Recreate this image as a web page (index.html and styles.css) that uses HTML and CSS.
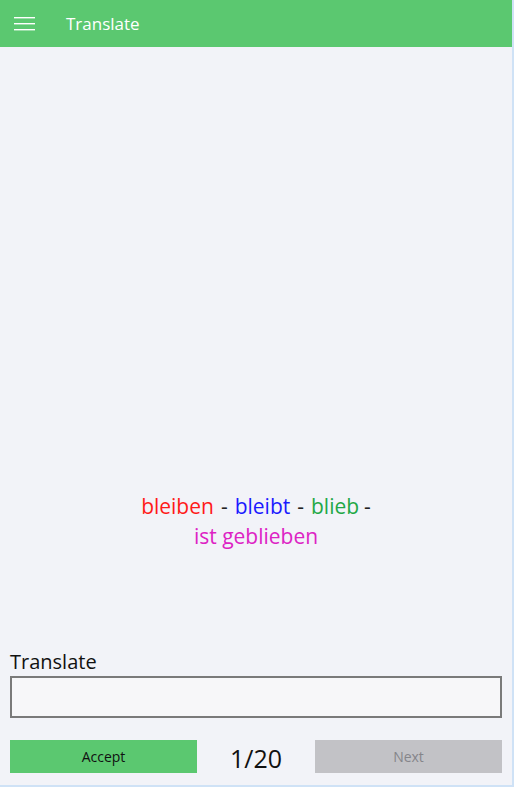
FILE: index.html
```html
<!DOCTYPE html>
<html>
<head>
<meta charset="utf-8">
<link rel="stylesheet" href="styles.css">
</head>
<body>
<div class="app">
  <header class="topbar">
    <button class="menu" aria-label="Menu">
      <svg width="21" height="14" viewBox="0 0 21 14"><rect x="0" y="0" width="21" height="1.4" fill="#fff"/><rect x="0" y="6" width="21" height="1.4" fill="#fff"/><rect x="0" y="12" width="21" height="1.4" fill="#fff"/></svg>
    </button>
    <span class="title">Translate</span>
  </header>
  <main class="content">
    <p class="forms">
      <span class="f1">bleiben</span><span class="dash">-</span><span class="f2">bleibt</span><span class="dash">-</span><span class="f3">blieb</span><span class="dash last">-</span><br>
      <span class="f4">ist geblieben</span>
    </p>
  </main>
  <section class="answer">
    <label class="label" for="ans">Translate</label>
    <input class="input" id="ans" type="text">
    <div class="actions">
      <button class="btn accept">Accept</button>
      <span class="count">1/20</span>
      <button class="btn next">Next</button>
    </div>
  </section>
</div>
</body>
</html>
```
FILE: styles.css
```css
html, body {
  margin: 0;
  padding: 0;
  background: #cfe2f6;
}
.app {
  width: 512px;
  height: 785px;
  background: #f2f3f8;
  display: flex;
  flex-direction: column;
  font-family: "Open Sans", "Noto Sans", sans-serif;
  border-right: 2px solid #cfe2f6;
  border-bottom: 2px solid #cfe2f6;
}
.topbar {
  height: 47px;
  background: #5bc870;
  display: flex;
  align-items: center;
  flex-shrink: 0;
}
.menu {
  background: none;
  border: 0;
  padding: 0;
  margin: 0 0 0 14px;
  width: 21px;
  height: 14px;
  display: flex;
}
.title {
  color: #fff;
  font-size: 17px;
  margin-left: 31px;
  padding-bottom: 1px;
}
.content {
  flex: 1;
  display: flex;
  flex-direction: column;
  justify-content: flex-end;
  padding-bottom: 99px;
}
.forms {
  margin: 0;
  text-align: center;
  font-size: 21px;
  line-height: 30px;
  color: #222;
}
.dash {
  margin: 0 7px;
}
.dash.last {
  margin: 0 0 0 5px;
}
.f1 { color: #ff1a1a; }
.f2 { color: #1a1aff; }
.f3 { color: #1fa846; }
.f4 { color: #dd22c4; }
.answer {
  padding: 0 10px 12px 10px;
  display: flex;
  flex-direction: column;
}
.label {
  font-size: 20px;
  color: #111;
  line-height: 24px;
  margin-bottom: 2px;
}
.input {
  box-sizing: border-box;
  height: 42px;
  width: 492px;
  border: 2px solid #7a7a7a;
  background: #f7f7f9;
  margin: 0;
  padding: 0 8px;
  font: inherit;
  outline: none;
}
.actions {
  margin-top: 21px;
  display: flex;
  align-items: center;
  justify-content: space-between;
  height: 34px;
}
.btn {
  width: 187px;
  height: 33px;
  border: 0;
  font-family: inherit;
  font-size: 14px;
  padding: 0;
}
.accept {
  background: #5bc870;
  color: #111;
}
.next {
  background: #c2c2c6;
  color: #85858a;
}
.count {
  font-size: 25px;
  color: #111;
  line-height: 34px;
  padding-top: 3px;
}
```
